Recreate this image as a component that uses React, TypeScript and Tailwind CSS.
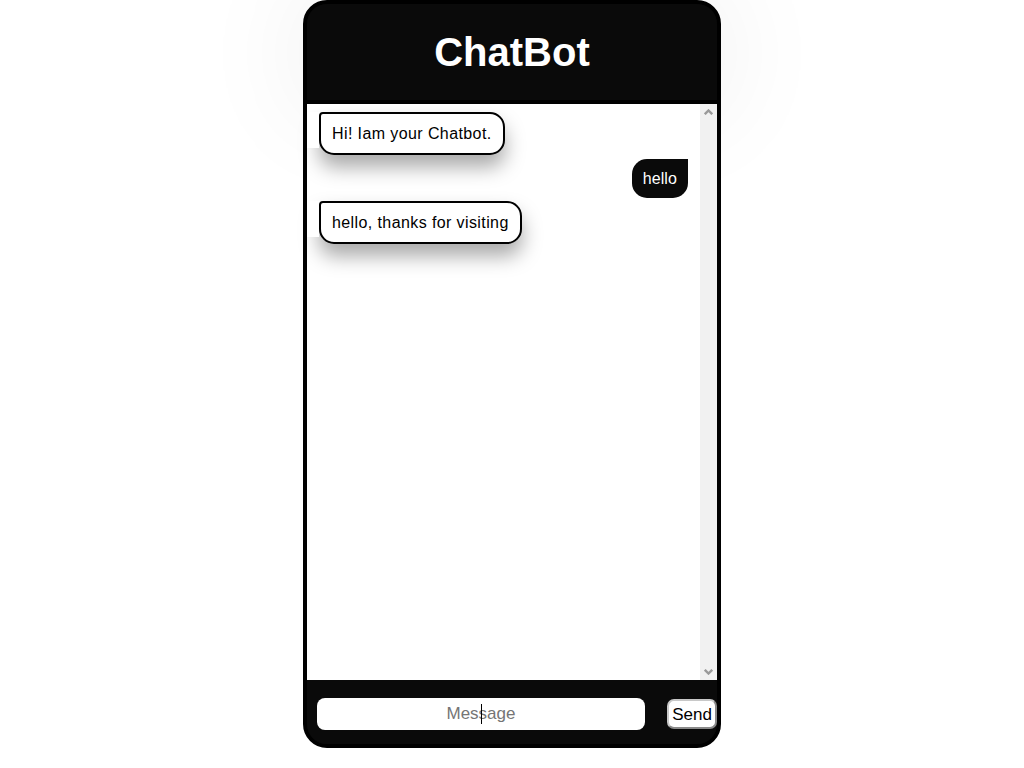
import { useState } from "react";

interface Message {
  id: number;
  text: string;
  from: "bot" | "user";
}

const initialMessages: Message[] = [
  { id: 1, text: "Hi! Iam your Chatbot.", from: "bot" },
  { id: 2, text: "hello", from: "user" },
  { id: 3, text: "hello, thanks for visiting", from: "bot" },
];

function ScrollArrow({ down }: { down?: boolean }) {
  return (
    <svg width="9" height="6" viewBox="0 0 9 6" className={down ? "rotate-180" : ""}>
      <path d="M0.8 5.2 L4.5 1.5 L8.2 5.2" fill="none" stroke="#9a9a9a" strokeWidth="2.4" />
    </svg>
  );
}

export default function App() {
  const [messages] = useState<Message[]>(initialMessages);
  const [draft, setDraft] = useState("");

  return (
    <div className="min-h-screen bg-white font-['Liberation_Sans',Arial,sans-serif]">
      <div className="mx-auto flex h-[748px] w-[418px] flex-col rounded-[24px] border-4 border-black bg-[#0a0a0a]">
        {/* Header */}
        <div className="flex h-[96px] shrink-0 items-center justify-center rounded-t-[20px] bg-[#0a0a0a] shadow-[0_0_120px_rgba(0,0,0,0.09)]">
          <h1 className="text-[40px] font-bold leading-none text-white">ChatBot</h1>
        </div>

        {/* Chat area */}
        <div className="flex h-[580px] shrink-0 border-t-4 border-black bg-white">
          <ul className="flex flex-1 flex-col pr-3 pt-2">
            {messages.map((m, i) =>
              m.from === "bot" ? (
                <li key={m.id} className={`flex items-start ${i === 0 ? "" : "mt-[3px]"}`}>
                  <div className="relative z-10 h-[36px] w-3 shrink-0 bg-white" />
                  <p className="rounded-[4px_15px_15px_15px] border-2 border-black bg-white px-[11px] py-[10px] text-[16px] leading-[19px] tracking-[0.4px] text-black shadow-[0_12px_20px_rgba(0,0,0,0.34)]">
                    {m.text}
                  </p>
                </li>
              ) : (
                <li key={m.id} className="mt-[4px] flex justify-end">
                  <p className="rounded-[15px_0_15px_15px] bg-[#0a0a0a] px-[11px] py-[10px] text-[16px] leading-[19px] tracking-[0.1px] text-white">
                    {m.text}
                  </p>
                </li>
              )
            )}
          </ul>
          <div className="flex w-[17px] shrink-0 flex-col items-center justify-between bg-[#f1f1f1] py-[5px]">
            <ScrollArrow />
            <ScrollArrow down />
          </div>
        </div>

        {/* Footer */}
        <div className="flex h-[64px] shrink-0 items-start justify-between rounded-b-[20px] bg-[#0a0a0a] pl-[10px] pt-[18px]">
          <div className="relative">
            <input
              autoFocus
              value={draft}
              onChange={(e) => setDraft(e.target.value)}
              placeholder="Message"
              className="h-[32px] w-[328px] rounded-[8px] bg-white text-center text-[17px] text-black caret-transparent outline-none placeholder:text-[#757575]"
            />
            {draft === "" && (
              <span className="pointer-events-none absolute left-[164px] top-[6px] h-[20px] w-px bg-black" />
            )}
          </div>
          <button className="mt-px h-[30px] w-[50px] rounded-[7px] border-2 border-[#c8c8c8] border-b-[#8a8a8a] border-r-[#8a8a8a] bg-white text-[17px] leading-none text-black">
            Send
          </button>
        </div>
      </div>
    </div>
  );
}
